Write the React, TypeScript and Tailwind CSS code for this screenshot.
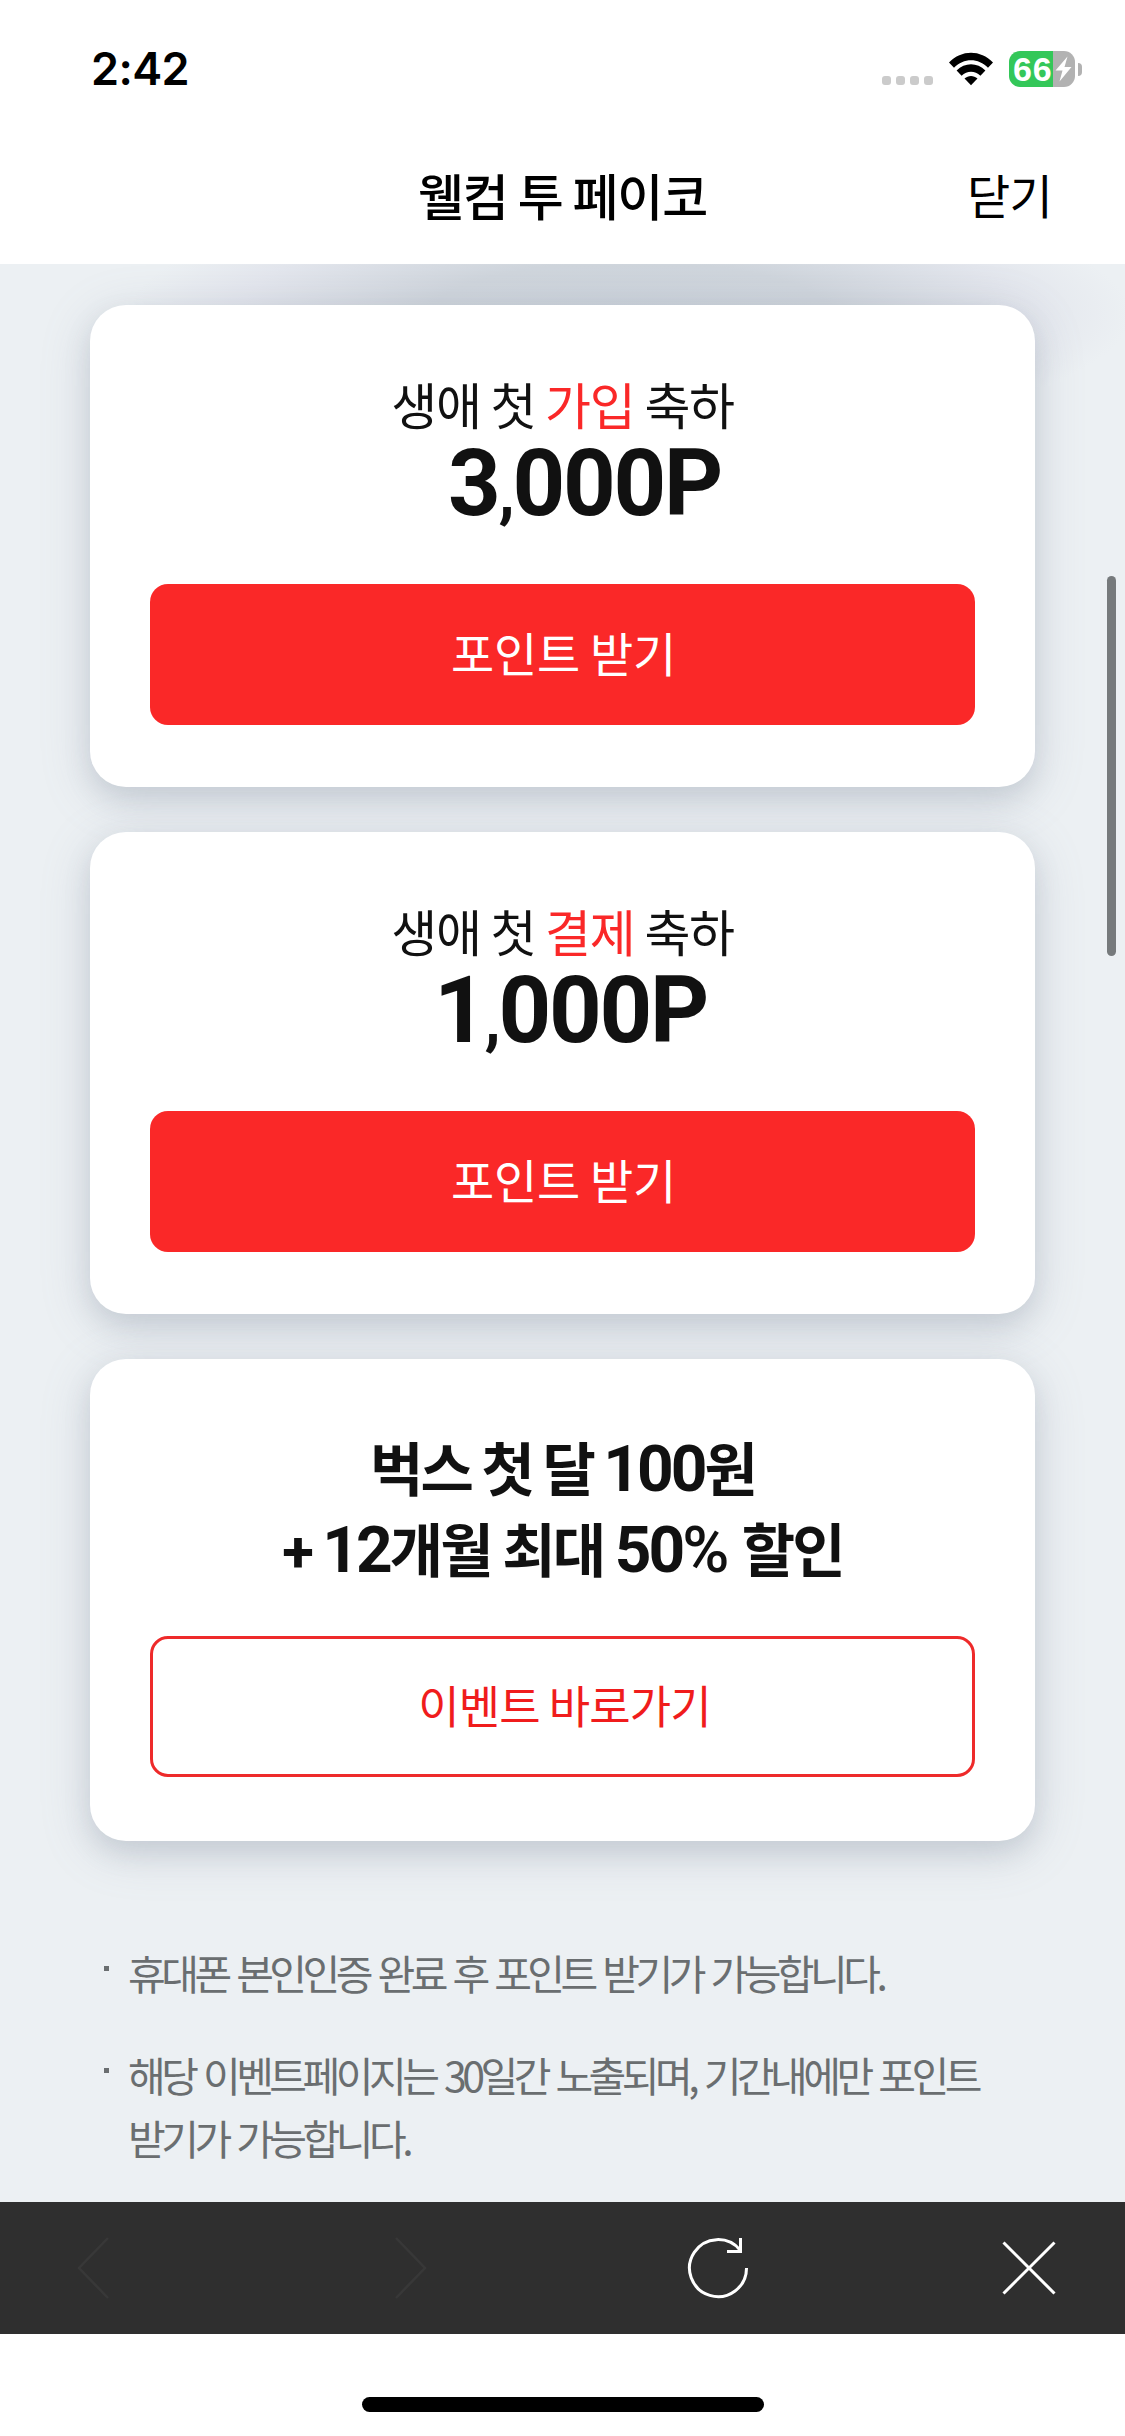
import type { ReactNode } from 'react'

const NOTES = [
  ['휴대폰 본인인증 완료 후 포인트 받기가 가능합니다.'],
  ['해당 이벤트페이지는 30일간 노출되며, 기간내에만 포인트', '받기가 가능합니다.'],
]

function StatusBar() {
  return (
    <div className="flex h-[132px] items-start justify-between pl-[91px] pr-[43px] pt-[42px]">
      <span className="font-['Inter'] text-[45px] font-semibold leading-[54px] tracking-[-0.6px]">2:42</span>
      <div className="flex h-[54px] items-center">
        <div className="mt-[23px] flex gap-[5px]">
          {[...Array(4)].map((_, i) => (
            <span key={i} className="size-[9px] rounded-[3px] bg-[#cbcbcb]" />
          ))}
        </div>
        <svg className="ml-[15px]" width="46" height="36" viewBox="0 0 46 36">
          <path d="M1 11.6C13.4-1.5 32.6-1.5 45 11.6L40 16.8C30.5 6.7 15.5 6.7 6 16.8Z" />
          <path d="M8.6 19.5C16.8 11.2 29.2 11.2 37.4 19.5L32.4 24.7C27 19.4 19 19.4 13.6 24.7Z" />
          <path d="M16.5 27.6C20.3 24 25.7 24 29.5 27.6L23 34.3Z" />
        </svg>
        <div className="ml-[15px] flex items-center gap-[3px]">
          <div className="relative flex h-9 w-[66px] items-center rounded-[11px] bg-[linear-gradient(90deg,#34c759_44px,#b2b2b2_44px)] pl-[4px]">
            <span className="font-['Liberation_Sans'] text-[34px] font-bold leading-9 tracking-[0.8px] text-white">66</span>
            <svg className="absolute left-[46px] top-[5px]" width="17" height="26" viewBox="0 0 17 26">
              <path d="M12.5 0.5L0.5 14.5H7.5L4.5 25.5L16.5 11H9.5Z" fill="#fff" />
            </svg>
          </div>
          <span className="h-[13px] w-[4px] rounded-r-full bg-[#b2b2b2]" />
        </div>
      </div>
    </div>
  )
}

function Card({ children }: { children: ReactNode }) {
  return (
    <section className="flex h-[482px] flex-col rounded-[36px] bg-white px-[60px] text-center text-[#111] shadow-[0_10px_50px_rgba(130,138,160,0.24),0_12px_26px_rgba(120,134,150,0.2)]">
      {children}
    </section>
  )
}

// Latin digits sit in Roboto next to the Korean face
function Num({ children }: { children: ReactNode }) {
  return <span className="font-['Roboto'] text-[64px] leading-none tracking-[-3px]">{children}</span>
}

interface PointCardProps {
  highlight: string
  amount: [string, string]
  amountClass: string
}

function PointCard({ highlight, amount, amountClass }: PointCardProps) {
  return (
    <Card>
      <p className="pt-[68px] text-[50px] leading-[60px] tracking-[-1.3px]">
        생애 첫 <span className="text-[#fa2828]">{highlight}</span> 축하
      </p>
      <p className={`mt-[4px] h-[94px] font-['Roboto'] text-[92px] font-bold leading-[94px] tracking-[-2.3px] ${amountClass}`}>
        {amount[0]}
        <span className="text-[66px] leading-none">,</span>
        {amount[1]}
      </p>
      <button className="mt-[53px] h-[141px] rounded-[18px] bg-[#fa2828] pb-[6px] pl-[2px] text-[47px] leading-[60px] tracking-[-0.3px] text-white">
        포인트 받기
      </button>
    </Card>
  )
}

function Toolbar() {
  return (
    <nav className="flex h-[132px] items-center bg-[#2f2f2f] pl-[76px]">
      <svg width="34" height="64" viewBox="0 0 34 64" fill="none" stroke="#383838" strokeWidth="2.5">
        <path d="M32 2L3 32L32 62" />
      </svg>
      <svg className="ml-[284px]" width="34" height="64" viewBox="0 0 34 64" fill="none" stroke="#383838" strokeWidth="2.5">
        <path d="M2 2L31 32L2 62" />
      </svg>
      <svg className="ml-[258px]" width="64" height="64" viewBox="0 0 64 64" fill="none" stroke="#fff" strokeWidth="3">
        <path d="M60.5 32A28.5 28.5 0 1 1 54 14" />
        <path d="M54.5 2V15.5H41" />
      </svg>
      <svg className="ml-[251px]" width="56" height="56" viewBox="0 0 56 56" fill="none" stroke="#fff" strokeWidth="3">
        <path d="M2.5 2.5L53.5 53.5M53.5 2.5L2.5 53.5" />
      </svg>
    </nav>
  )
}

export default function App() {
  return (
    <div className="relative flex h-[2436px] w-[1125px] flex-col overflow-hidden bg-white font-['Noto_Sans_CJK_KR',sans-serif] text-black">
      <StatusBar />
      <header className="grid h-[132px] grid-cols-[1fr_auto_1fr] items-center px-[73px]">
        <h1 className="col-start-2 pb-[9px] text-[50px] font-medium leading-[60px] tracking-[-1.2px]">웰컴 투 페이코</h1>
        <button className="justify-self-end pb-[9px] text-[47px] leading-[60px] tracking-[-0.8px]">닫기</button>
      </header>

      <main className="h-[1938px] overflow-hidden bg-[#ecf0f3] bg-[radial-gradient(ellipse_500px_130px_at_630px_50px,#ccd3db_0%,#cfd5dc_40%,#e3e6ed_78%,#ecf0f3_100%)] bg-no-repeat px-[90px] pt-[41px]">
        <div className="flex flex-col gap-[45px]">
          <PointCard highlight="가입" amount={['3', '000P']} amountClass="pl-[44px]" />
          <PointCard highlight="결제" amount={['1', '000P']} amountClass="pl-[16px]" />
          <Card>
            <h2 className="pt-[67px] text-[58px] font-bold leading-[81px] tracking-[-2.8px]">
              벅스 첫 달 <Num>100</Num>원
              <br />
              <span className="[word-spacing:1px]">
                <span className="font-['Roboto'] leading-none">+</span> <Num>12</Num>개월 최대{' '}
                <Num>50<span className="font-medium tracking-[1px]">%</span></Num> 할인
              </span>
            </h2>
            <button className="mt-[48px] h-[141px] rounded-[18px] border-[3px] border-[#ee2a2a] pb-[4px] pl-[4px] text-[45px] leading-[60px] tracking-[-0.9px] text-[#f01c1c]">
              이벤트 바로가기
            </button>
          </Card>
        </div>

        <ul className="mt-[100px] flex flex-col gap-[39px] text-[41px] leading-[63px] tracking-[-4.5px] text-[#6a6e70] [word-spacing:3.8px]">
          {NOTES.map((lines) => (
            <li key={lines[0]} className="flex pl-[14px]">
              <span className="mt-[25px] mr-[19px] size-[5px] shrink-0 bg-[#6a6e70]" />
              <p className="whitespace-nowrap">
                {lines.map((line) => (
                  <span key={line} className="block">{line}</span>
                ))}
              </p>
            </li>
          ))}
        </ul>
      </main>

      <Toolbar />
      <div className="flex h-[102px] justify-center pt-[63px]">
        <span className="h-[15px] w-[402px] rounded-full bg-black" />
      </div>

      {/* scroll indicator */}
      <span className="absolute right-[9px] top-[576px] h-[380px] w-[9px] rounded-full bg-[#767a7c]" />
    </div>
  )
}
